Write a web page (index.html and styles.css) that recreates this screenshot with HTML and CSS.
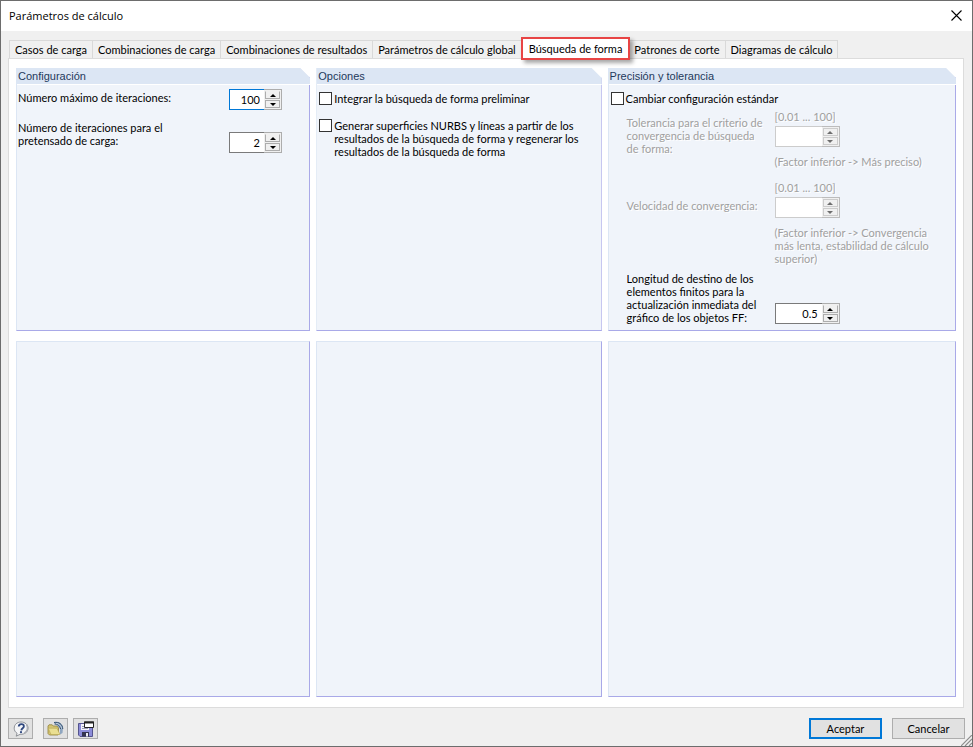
FILE: index.html
```html
<!DOCTYPE html>
<html lang="es">
<head>
    <meta charset="UTF-8">
    <meta name="viewport" content="width=device-width, initial-scale=1.0">
    <title>Parámetros de cálculo</title>
    <link rel="stylesheet" href="styles.css">
</head>
<body>
    <form class="dialog" onsubmit="return false;">
        <header class="titlebar">
            <h1>Parámetros de cálculo</h1>
            <button type="button" class="close" aria-label="Cerrar">
                <svg width="11" height="11" viewBox="0 0 11 11"><path d="M.5.5l10 10M10.5.5l-10 10" stroke="#000" stroke-width="1.1"/></svg>
            </button>
        </header>

        <nav class="tabs" role="tablist">
            <button type="button" class="tab" role="tab">Casos de carga</button>
            <button type="button" class="tab" role="tab">Combinaciones de carga</button>
            <button type="button" class="tab" role="tab">Combinaciones de resultados</button>
            <button type="button" class="tab" role="tab">Parámetros de cálculo global</button>
            <button type="button" class="tab active" role="tab" aria-selected="true">Búsqueda de forma</button>
            <button type="button" class="tab" role="tab">Patrones de corte</button>
            <button type="button" class="tab" role="tab">Diagramas de cálculo</button>
        </nav>

        <main class="page">
            <section class="group">
                <h2>Configuración</h2>
                <div class="group-body config">
                    <div class="row">
                        <label for="maxIter">Número máximo de iteraciones:</label>
                        <div class="spin focused">
                            <input type="text" id="maxIter" value="100">
                            <div class="arrows">
                                <button type="button" class="up" aria-label="Más"></button>
                                <button type="button" class="down" aria-label="Menos"></button>
                            </div>
                        </div>
                    </div>
                    <div class="row">
                        <label for="preIter">Número de iteraciones para el<br>pretensado de carga:</label>
                        <div class="spin">
                            <input type="text" id="preIter" value="2">
                            <div class="arrows">
                                <button type="button" class="up" aria-label="Más"></button>
                                <button type="button" class="down" aria-label="Menos"></button>
                            </div>
                        </div>
                    </div>
                </div>
            </section>

            <section class="group">
                <h2>Opciones</h2>
                <div class="group-body options">
                    <label class="check"><input type="checkbox"><span>Integrar la búsqueda de forma preliminar</span></label>
                    <label class="check"><input type="checkbox"><span>Generar superficies NURBS y líneas a partir de los<br>resultados de la búsqueda de forma y regenerar los<br>resultados de la búsqueda de forma</span></label>
                </div>
            </section>

            <section class="group">
                <h2>Precisión y tolerancia</h2>
                <div class="group-body">
                    <label class="check"><input type="checkbox"><span>Cambiar configuración estándar</span></label>
                    <div class="precision">
                        <label class="muted" for="tolerance">Tolerancia para el criterio de<br>convergencia de búsqueda<br>de forma:</label>
                        <div class="field muted">
                            <span>[0.01 ... 100]</span>
                            <div class="spin wide disabled">
                                <input type="text" id="tolerance" disabled>
                                <div class="arrows">
                                    <button type="button" class="up" aria-label="Más" disabled></button>
                                    <button type="button" class="down" aria-label="Menos" disabled></button>
                                </div>
                            </div>
                            <span class="hint">(Factor inferior -&gt; Más preciso)</span>
                        </div>
                    </div>
                    <div class="precision speed">
                        <label class="muted" for="speed">Velocidad de convergencia:</label>
                        <div class="field muted">
                            <span>[0.01 ... 100]</span>
                            <div class="spin wide disabled">
                                <input type="text" id="speed" disabled>
                                <div class="arrows">
                                    <button type="button" class="up" aria-label="Más" disabled></button>
                                    <button type="button" class="down" aria-label="Menos" disabled></button>
                                </div>
                            </div>
                            <span class="hint">(Factor inferior -&gt; Convergencia<br>más lenta, estabilidad de cálculo<br>superior)</span>
                        </div>
                    </div>
                    <div class="precision length">
                        <label for="length">Longitud de destino de los<br>elementos finitos para la<br>actualización inmediata del<br>gráfico de los objetos FF:</label>
                        <div class="spin wide">
                            <input type="text" id="length" value="0.5">
                            <div class="arrows">
                                <button type="button" class="up" aria-label="Más"></button>
                                <button type="button" class="down" aria-label="Menos"></button>
                            </div>
                        </div>
                    </div>
                </div>
            </section>

            <section class="group empty"></section>
            <section class="group empty"></section>
            <section class="group empty"></section>
        </main>

        <footer class="footer">
            <button type="button" class="btn icon help" aria-label="Ayuda">
                <svg width="16" height="16" viewBox="0 0 16 16">
                    <path d="M8 1C4 1 1.200 3.700 1.200 7.200c0 2.200 1.100 4 2.900 5.100L3.200 15.200l4-1.900c4.500.300 7.800-2.400 7.800-6.100C15 3.700 12 1 8 1z" fill="#f4f5f7" stroke="#8d9096"/>
                    <path d="M13.500 3.500c2 3 1 7-2.500 8.800" fill="none" stroke="#aaadb4" stroke-width="1.500"/>
                    <path d="M5.700 5.500C5.900 3.900 7 3.200 8.400 3.200c1.500 0 2.500.8 2.500 2.100 0 2-2.400 1.900-2.600 4" fill="none" stroke="#30487f" stroke-width="1.800"/>
                    <circle cx="8" cy="11.200" r="1.100" fill="#30487f"/>
                </svg>
            </button>
            <button type="button" class="btn icon" aria-label="Abrir">
                <svg width="17" height="16" viewBox="0 0 17 16">
                    <path d="M7 1.500c5-1.500 8.500 1.500 9 5.500l-.5 5-2.500 1.500V8z" fill="#8fa6c0"/>
                    <path d="M7 1.500c5-1 8.500 1.800 8.800 6.500M7.500 3c3.500-.3 5.700 1.700 6.200 5" fill="none" stroke="#33506f"/>
                    <path d="M9 2.500c3 .2 5 2.200 5.500 5" fill="none" stroke="#d7e2ee" stroke-width=".8"/>
                    <path d="M1 5l1-1.200h3.200l1 1.200H10l1.500 2v5.500L11 14H2.500L1 12.500z" fill="#d5c571" stroke="#91803a" stroke-width=".8"/>
                    <path d="M1.200 7.200h8.800l3 6.300H4z" fill="#eadf91" stroke="#b4a251" stroke-width=".6"/>
                </svg>
            </button>
            <button type="button" class="btn icon" aria-label="Guardar">
                <svg width="16" height="16" viewBox="0 0 16 16">
                    <path d="M.5 2.500h14v13H2L.5 14z" fill="#8c8cd8" stroke="#54548e"/>
                    <path d="M3 3h8v6H3z" fill="#f4f4fa"/>
                    <path d="M4 5.500h6M4 7.500h6" stroke="#9a9ab4"/>
                    <path d="M4 11h7v4.500H4z" fill="#33334f"/>
                    <path d="M8 12h2v3.500H8z" fill="#ededf6"/>
                    <path d="M6.500 1h9v5.500h-9z" fill="#fff" stroke="#222"/>
                    <path d="M6 1.500h10" stroke="#222" stroke-width="2"/>
                </svg>
            </button>
            <button type="submit" class="btn default">Aceptar</button>
            <button type="button" class="btn">Cancelar</button>
            <svg class="grip" width="11" height="11" viewBox="0 0 11 11"><path d="M0 11L11 0M4 11l7-7M8 11l3-3" stroke="#8c8c8c" stroke-width="1.200"/></svg>
        </footer>
    </form>
</body>
</html>
```
FILE: styles.css
```css
* {
    box-sizing: border-box;
}
body {
    margin: 0;
    font-family: Lato, Tahoma, sans-serif;
    font-size: 11px;
    line-height: 13px;
    color: #000;
}
button, input {
    font: inherit;
    color: inherit;
    margin: 0;
}
.dialog {
    display: flex;
    flex-direction: column;
    min-height: 100vh;
    background: #f0f0f0;
    border: 1px solid #6d6d6d;
}
.titlebar {
    display: flex;
    align-items: center;
    justify-content: space-between;
    height: 30px;
    padding: 0 10px 2px 8px;
    background: #fff;
}
.titlebar h1 {
    margin: 0;
    font: 11px "Open Sans", "Segoe UI", sans-serif;
}
.close {
    display: flex;
    padding: 0;
    border: none;
    background: none;
}

/* tabs */
.tabs {
    display: flex;
    margin: 9px 8px 0 8px;
    height: 18px;
}
.tab {
    padding: 0 5px;
    border: 1px solid #d9d9d9;
    border-left: none;
    border-bottom: none;
    background: #f0f0f0;
    white-space: nowrap;
}
.tab:first-child {
    border-left: 1px solid #d9d9d9;
}
.tab.active {
    position: relative;
    height: 23px;
    margin: -3px -1px 0;
    padding: 0 6px;
    border: 2px solid #e84545;
    background: #fff;
    box-shadow: 3px 3px 4px rgba(0,0,0,0.35);
}
.page {
    flex: 1;
    display: grid;
    grid-template-columns: 294fr 285fr 348fr;
    grid-template-rows: auto 1fr;
    gap: 10px 6px;
    margin: 0 8px 0 7px;
    padding: 9px 7px 10px 7px;
    background: #fff;
    border: 1px solid #dcdcdc;
}

/* groups */
.group {
    background: #f0f4fa;
    border: 1px solid #dce6f4;
    border-right-color: #a9a9e8;
    border-bottom-color: #a9a9e8;
    border-top: none;
    clip-path: polygon(0 0, calc(100% - 10px) 0, 100% 10px, 100% 100%, 0 100%);
}
.group.empty {
    border-top: 1px solid #dce6f4;
    clip-path: none;
}
.group h2 {
    margin: 0 -1px 0 0;
    padding: 2px 1px 1px;
    background: #dce6f4;
    border-bottom: 1px solid #fff;
    font: 11px/13px "Liberation Sans", Arial, sans-serif;
    color: #1e395b;
}
.group-body {
    padding: 7px 2px 6px;
}
.config {
    display: flex;
    flex-direction: column;
    gap: 11px;
    padding: 4px 1px;
}
.row {
    display: grid;
    grid-template-columns: 211px auto;
    justify-content: start;
    align-items: end;
}
.row label {
    padding-bottom: 6px;
}
.options {
    display: grid;
    align-content: start;
    gap: 14px;
}
.check {
    display: flex;
    align-items: flex-start;
    gap: 2px;
}
.check input {
    flex: none;
    appearance: none;
    width: 13px;
    height: 13px;
    border: 1px solid #333;
    background: #fff;
}
.check input:checked {
    background: #333;
}

/* number boxes */
.spin {
    display: flex;
    width: 53px;
    height: 21px;
}
.spin.wide {
    width: 65px;
}
.spin input {
    flex: 1;
    min-width: 0;
    padding: 0 4px;
    border: 1px solid #7a7a7a;
    border-right: none;
    border-radius: 0;
    background: #fff;
    text-align: right;
    outline: none;
}
.spin.focused input {
    border-color: #0078d7;
}
.spin.disabled input {
    border-color: #ccc;
}
.arrows {
    display: grid;
    gap: 1px;
    width: 18px;
    padding: 1px;
    border: 1px solid #adadad;
    border-left: none;
    background: #f0f0f0;
}
.arrows button {
    display: flex;
    align-items: center;
    justify-content: center;
    padding: 0;
    border: 1px solid #adadad;
    border-top-color: #f0f0f0;
    background: #f0f0f0;
}
.arrows .down {
    border-top-color: #adadad;
}
.arrows button::before {
    content: "";
    border: 3px solid transparent;
}
.arrows .up::before {
    border-top: none;
    border-bottom: 3px solid #000;
}
.arrows .down::before {
    border-bottom: none;
    border-top: 3px solid #000;
}
.disabled .arrows {
    border-color: #bcbcbc;
}
.disabled .arrows button {
    border-color: #ccc;
}
.disabled .up::before {
    border-bottom-color: #6d6d6d;
}
.disabled .down::before {
    border-top-color: #6d6d6d;
}

/* precision fields */
.precision {
    display: grid;
    grid-template-columns: 148px auto;
    justify-content: start;
    margin: 5px 0 0 16px;
}
.precision label {
    padding-top: 6px;
}
.precision.speed {
    margin-top: 13px;
}
.speed label {
    padding-top: 18px;
}
.precision.length {
    align-items: end;
    margin-top: 1px;
}
.muted {
    color: #a0a0a0;
    text-shadow: 1px 1px #fff;
}
.field {
    display: flex;
    flex-direction: column;
    gap: 3px;
}
.hint {
    margin-top: 5px;
}

/* footer */
.footer {
    position: relative;
    display: flex;
    gap: 10px;
    padding: 10px 7px 7px;
}
.btn {
    display: flex;
    align-items: center;
    justify-content: center;
    width: 73px;
    height: 21px;
    padding: 0;
    border: 1px solid #adadad;
    background: #e1e1e1;
}
.btn.icon {
    width: 25px;
}
.btn.icon + .icon + .icon {
    margin-left: -5px;
}
.btn.default {
    margin-left: auto;
    border: 2px solid #0078d7;
}
.grip {
    position: absolute;
    right: 0;
    bottom: 0;
}
```
